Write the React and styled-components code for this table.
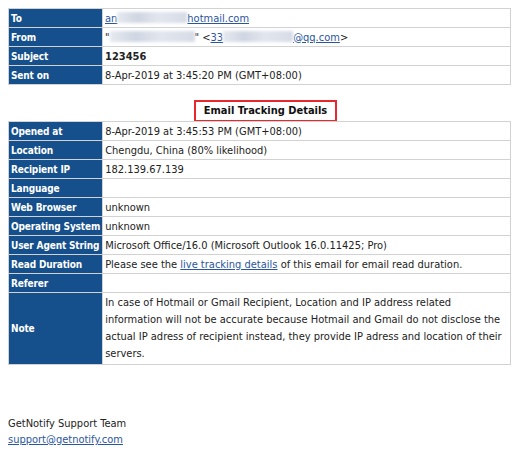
import React from "react";
import styled, { createGlobalStyle } from "styled-components";

const Global = createGlobalStyle`
  html, body { margin: 0; padding: 0; background: #fff; }
  body {
    padding: 8px;
    font-family: "DejaVu Sans Condensed", "DejaVu Sans", sans-serif;
    font-size: 11px;
    color: #222;
  }
`;

const Page = styled.div`
  width: 503px;
  display: flex;
  flex-direction: column;
`;

const Table = styled.table`
  width: 100%;
  border-collapse: collapse;
  border: 1px solid #d2d2d2;
`;

const Head = styled.th`
  width: 89px;
  background: #154f8c;
  color: #fff;
  font-weight: bold;
  font-size: 10px;
  letter-spacing: -0.15px;
  text-align: left;
  padding: 0 2px;
  height: ${(p) => (p.$tall ? "70px" : "18px")};
  border: 1px solid #d2d2d2;
  white-space: nowrap;
`;

const Cell = styled.td`
  padding: ${(p) => (p.$tall ? "1px 2px 2px" : "0 2px")};
  border: 1px solid #d2d2d2;
  line-height: ${(p) => (p.$tall ? "17px" : "normal")};
  font-weight: ${(p) => (p.$bold ? "bold" : "normal")};
  vertical-align: middle;
`;

const Link = styled.a`
  color: #2a56a0;
  text-decoration: underline;
`;

const Blur = styled.span`
  display: inline-block;
  width: ${(p) => p.$w}px;
  height: 11px;
  vertical-align: -1px;
  background: linear-gradient(90deg, #e6e9ef, #cfd6e2 30%, #e2e6ee 60%, #d5dbe6);
  filter: blur(1.5px);
`;

const TitleRow = styled.div`
  display: flex;
  justify-content: center;
  padding: 15px 0 0 12px;
  margin-bottom: -1px;
`;

const Title = styled.div`
  border: 2px solid #e8282c;
  padding: 2px 8px 3px;
  font-weight: bold;
  font-size: 11px;
  color: #111;
`;

const Footer = styled.div`
  margin-top: 52px;
  display: flex;
  flex-direction: column;
  gap: 3px;
`;

const Row = ({ label, children, bold, tall }) => (
  <tr>
    <Head $tall={tall}>{label}</Head>
    <Cell $bold={bold} $tall={tall}>{children}</Cell>
  </tr>
);

export default function App() {
  return (
    <>
      <Global />
      <Page>
        <Table>
          <tbody>
            <Row label="To">
              <Link href="#">an<Blur $w={70} />hotmail.com</Link>
            </Row>
            <Row label="From">
              "<Blur $w={85} />" &lt;<Link href="#">33<Blur $w={70} />@qq.com</Link>&gt;
            </Row>
            <Row label="Subject" bold>123456</Row>
            <Row label="Sent on">8-Apr-2019 at 3:45:20 PM (GMT+08:00)</Row>
          </tbody>
        </Table>
        <TitleRow>
          <Title>Email Tracking Details</Title>
        </TitleRow>
        <Table>
          <tbody>
            <Row label="Opened at">8-Apr-2019 at 3:45:53 PM (GMT+08:00)</Row>
            <Row label="Location">Chengdu, China (80% likelihood)</Row>
            <Row label="Recipient IP">182.139.67.139</Row>
            <Row label="Language"></Row>
            <Row label="Web Browser">unknown</Row>
            <Row label="Operating System">unknown</Row>
            <Row label="User Agent String">Microsoft Office/16.0 (Microsoft Outlook 16.0.11425; Pro)</Row>
            <Row label="Read Duration">
              Please see the <Link href="#">live tracking details</Link> of this email for email read duration.
            </Row>
            <Row label="Referer"></Row>
            <Row label="Note" tall>
              In case of Hotmail or Gmail Recipient, Location and IP address related information will not be accurate because Hotmail and Gmail do not disclose the actual IP adress of recipient instead, they provide IP adress and location of their servers.
            </Row>
          </tbody>
        </Table>
        <Footer>
          <span>GetNotify Support Team</span>
          <Link href="#">support@getnotify.com</Link>
        </Footer>
      </Page>
    </>
  );
}
